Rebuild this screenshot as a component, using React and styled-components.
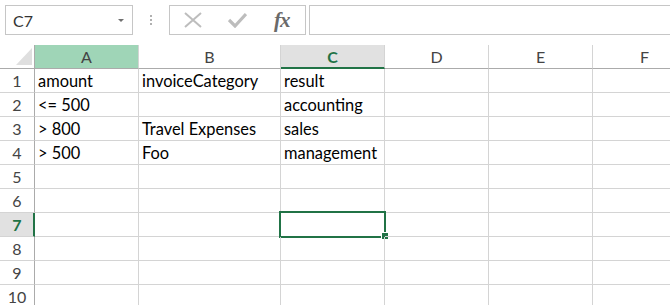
import React from 'react';
import styled, { createGlobalStyle, css } from 'styled-components';

const GlobalStyle = createGlobalStyle`
  html, body {
    margin: 0;
    padding: 0;
    background: #fff;
    overflow: hidden;
  }
  body {
    font-family: Lato, "Liberation Sans", sans-serif;
  }
`;

const GREEN = '#217346';
const GRID = '#d4d4d4';

const Sheet = styled.div`
  width: 670px;
  height: 305px;
  overflow: hidden;
  background: #fff;
`;

const Toolbar = styled.div`
  display: flex;
  align-items: center;
  height: 30px;
  padding: 5px 0 10px 5px;
`;

const NameBox = styled.div`
  box-sizing: border-box;
  width: 128px;
  height: 30px;
  border: 1px solid #c6c6c6;
  display: flex;
  align-items: center;
  justify-content: space-between;
  padding: 0 8px 0 7px;
  font-size: 16px;
  color: #333;
`;

const Caret = styled.span`
  width: 0;
  height: 0;
  border-left: 3px solid transparent;
  border-right: 3px solid transparent;
  border-top: 3px solid #707070;
`;

const Grip = styled.div`
  display: flex;
  flex-direction: column;
  gap: 2px;
  margin: 0 17px;
  & > span {
    width: 2px;
    height: 2px;
    background: #b0b0b0;
  }
`;

const FormulaButtons = styled.div`
  box-sizing: border-box;
  width: 137px;
  height: 30px;
  border: 1px solid #c6c6c6;
  display: flex;
  align-items: center;
  padding-left: 14px;
  gap: 26px;
`;

const Fx = styled.span`
  font-family: "Liberation Serif", serif;
  font-style: italic;
  font-weight: bold;
  font-size: 21px;
  line-height: 1;
  color: #6a6a6a;
  letter-spacing: -1px;
  margin-left: 1px;
`;

const FormulaInput = styled.div`
  box-sizing: border-box;
  flex: 1;
  height: 30px;
  margin-left: 3px;
  margin-right: -4px;
  border: 1px solid #c6c6c6;
`;

const Grid = styled.div`
  display: grid;
  grid-template-columns: 35px 104px 142px 104px 104px 104px 104px;
  grid-auto-rows: 24px;
`;

const Cell = styled.div`
  box-sizing: border-box;
  position: relative;
  border-right: 1px solid ${GRID};
  border-bottom: 1px solid ${GRID};
  display: flex;
  align-items: flex-end;
  padding: 0 0 1px 3px;
  font-size: 16.4px;
  line-height: 20px;
  color: #000;
  white-space: nowrap;
`;

const ColHead = styled.div`
  box-sizing: border-box;
  display: flex;
  align-items: flex-end;
  justify-content: center;
  padding-bottom: 1px;
  border-right: 1px solid ${GRID};
  border-bottom: 1px solid #ababab;
  font-size: 16px;
  line-height: 20px;
  color: #444;
  ${p => p.$highlight && css`
    background: #9fd5b7;
  `}
  ${p => p.$active && css`
    background: #e1e1e1;
    color: ${GREEN};
    font-weight: bold;
    border-bottom: 2px solid ${GREEN};
    padding-bottom: 0;
  `}
`;

const Corner = styled.div`
  box-sizing: border-box;
  display: flex;
  align-items: flex-end;
  justify-content: flex-end;
  padding: 0 2px 3px 0;
  border-right: 1px solid #ababab;
  border-bottom: 1px solid #ababab;
`;

const Triangle = styled.div`
  width: 16px;
  height: 17px;
  background: #dfdfdf;
  clip-path: polygon(100% 0, 100% 100%, 0 100%);
`;

const RowHead = styled.div`
  box-sizing: border-box;
  display: flex;
  align-items: flex-end;
  justify-content: center;
  padding-bottom: 1px;
  border-right: 1px solid #ababab;
  border-bottom: 1px solid ${GRID};
  font-size: 16px;
  line-height: 20px;
  color: #444;
  ${p => p.$active && css`
    background: #e1e1e1;
    color: ${GREEN};
    font-weight: bold;
    border-right: 2px solid ${GREEN};
    padding-left: 1px;
  `}
`;

const Selection = styled.div`
  position: absolute;
  left: -2px;
  top: -2px;
  width: 107px;
  height: 27px;
  box-sizing: border-box;
  border: 2px solid ${GREEN};
  pointer-events: none;
`;

const FillHandle = styled.div`
  position: absolute;
  left: 100px;
  top: 19px;
  width: 8px;
  height: 8px;
  box-sizing: border-box;
  background: ${GREEN};
  border: 1px solid #fff;
`;

const columns = ['A', 'B', 'C', 'D', 'E', 'F'];

const data = [
  ['amount', 'invoiceCategory', 'result'],
  ['<= 500', '', 'accounting'],
  ['> 800', 'Travel Expenses', 'sales'],
  ['> 500', 'Foo', 'management'],
];

const activeRow = 7;
const activeCol = 'C';

function XIcon() {
  return (
    <svg width="18" height="16" viewBox="0 0 18 16">
      <path d="M1 1 L17 15 M17 1 L1 15" stroke="#bdbdbd" strokeWidth="2" fill="none" />
    </svg>
  );
}

function CheckIcon() {
  return (
    <svg width="19" height="16" viewBox="0 0 19 16">
      <path d="M1 8 L7 14 L18 2" stroke="#bdbdbd" strokeWidth="3.2" fill="none" />
    </svg>
  );
}

export default function App() {
  const rows = Array.from({ length: 10 }, (_, i) => i + 1);
  return (
    <Sheet>
      <GlobalStyle />
      <Toolbar>
        <NameBox>
          <span>C7</span>
          <Caret />
        </NameBox>
        <Grip>
          <span />
          <span />
          <span />
        </Grip>
        <FormulaButtons>
          <XIcon />
          <CheckIcon />
          <Fx>fx</Fx>
        </FormulaButtons>
        <FormulaInput />
      </Toolbar>
      <Grid>
        <Corner>
          <Triangle />
        </Corner>
        {columns.map(c => (
          <ColHead key={c} $highlight={c === 'A'} $active={c === activeCol}>
            {c}
          </ColHead>
        ))}
        {rows.map(r => (
          <React.Fragment key={r}>
            <RowHead $active={r === activeRow}>{r}</RowHead>
            {columns.map((c, ci) => (
              <Cell key={c}>
                {(data[r - 1] && data[r - 1][ci]) || ''}
                {r === activeRow && c === activeCol && (
                  <Selection>
                    <FillHandle />
                  </Selection>
                )}
              </Cell>
            ))}
          </React.Fragment>
        ))}
      </Grid>
    </Sheet>
  );
}
